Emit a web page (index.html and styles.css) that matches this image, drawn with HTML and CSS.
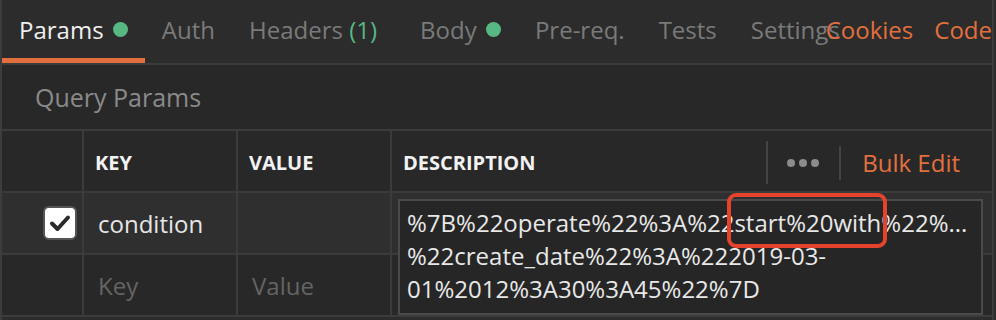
FILE: index.html
```html
<!DOCTYPE html>
<html lang="en">
<head>
  <meta charset="UTF-8" />
  <title>Params</title>
  <link rel="stylesheet" href="styles.css">
</head>
<body>

  <div class="panel">
    <div class="tabs">
      <div class="tab-list">
        <div class="tab active">Params <span class="dot"></span></div>
        <div class="tab">Auth</div>
        <div class="tab">Headers <span class="count">(1)</span></div>
        <div class="tab">Body <span class="dot"></span></div>
        <div class="tab">Pre-req.</div>
        <div class="tab">Tests</div>
        <div class="tab">Settings</div>
      </div>
      <div class="tab-actions">
        <span>Cookies</span>
        <span>Code</span>
      </div>
    </div>

    <div class="section-title">Query Params</div>

    <div class="params">
      <div class="cell head"></div>
      <div class="cell head">KEY</div>
      <div class="cell head">VALUE</div>
      <div class="cell head last">
        <span class="head-label">DESCRIPTION</span>
        <span class="sep tall"></span>
        <span class="more"><i></i><i></i><i></i></span>
        <span class="sep"></span>
        <span class="bulk">Bulk Edit</span>
      </div>

      <div class="cell row check-cell">
        <span class="checkbox">
          <svg width="22" height="18" viewBox="0 0 22 18"><path d="M3 9.5 L8.5 15 L19 3.5" fill="none" stroke="#2b2b2b" stroke-width="4" stroke-linecap="round" stroke-linejoin="round"/></svg>
        </span>
      </div>
      <div class="cell row">condition</div>
      <div class="cell row"></div>
      <div class="cell row last desc-cell">
        <div class="editor">
          <div class="editor-line">%7B%22operate%22%3A%22start%20with%22%...</div>
          <div class="editor-line">%22create_date%22%3A%222019-03-</div>
          <div class="editor-line">01%2012%3A30%3A45%22%7D</div>
        </div>
        <div class="mark"></div>
      </div>

      <div class="cell blank"></div>
      <div class="cell blank placeholder">Key</div>
      <div class="cell blank placeholder">Value</div>
      <div class="cell blank last"></div>
    </div>
  </div>

</body>
</html>
```

FILE: styles.css
```css
body {
  margin: 0;
  background: #2c2c2c;
  font-family: "Open Sans", "Liberation Sans", sans-serif;
  overflow: hidden;
}
.panel {
  width: 990px;
  height: 320px;
  border-left: 2px solid #3d3d3d;
  border-right: 2px solid #3d3d3d;
  overflow: hidden;
}
.tabs {
  display: flex;
  height: 63px;
  border-bottom: 2px solid #3b3b3b;
  background: #2c2c2c;
  font-size: 24px;
}
.tab-list {
  display: flex;
  flex: 1;
  min-width: 0;
}
.tab {
  display: flex;
  align-items: center;
  flex-shrink: 0;
  padding: 0 17px 4px;
  color: #7a7a7a;
  white-space: pre;
}
.tab.active {
  color: #f0f0f0;
  box-shadow: inset 0 -5px 0 #e2703f;
}
.dot {
  width: 15px;
  height: 15px;
  margin-left: 3px;
  border-radius: 50%;
  background: #57b884;
}
.count {
  color: #57b884;
  margin-right: 9px;
}
.tab-actions {
  display: flex;
  align-items: center;
  gap: 21px;
  flex-shrink: 0;
  padding-bottom: 4px;
  color: #e2703f;
}
.section-title {
  height: 64px;
  padding-left: 33px;
  display: flex;
  align-items: center;
  background: #282828;
  border-bottom: 2px solid #3b3b3b;
  color: #8a8a8a;
  font-size: 25px;
}
.params {
  display: grid;
  grid-template-columns: 82px 154px 154px 1fr;
  grid-auto-rows: 62px;
}
.cell {
  display: flex;
  align-items: center;
  box-sizing: border-box;
  border-right: 2px solid #3b3b3b;
  border-bottom: 2px solid #3b3b3b;
  font-size: 24px;
  color: #e6e6e6;
  padding-left: 14px;
}
.cell.last {
  border-right: none;
}
.head {
  background: #282828;
  padding-left: 11px;
  padding-top: 3px;
  font-size: 20px;
  font-weight: 700;
  color: #f2f2f2;
}
.head-label {
  flex: 1;
}
.sep {
  width: 2px;
  height: 34px;
  background: #444;
}
.sep.tall {
  height: 43px;
}
.more {
  display: flex;
  gap: 4px;
  padding: 0 20px 0 19px;
}
.more i {
  width: 8px;
  height: 8px;
  border-radius: 50%;
  background: #8c8c8c;
}
.bulk {
  padding: 0 32px 0 21px;
  font-weight: 400;
  font-size: 24px;
  color: #e2703f;
}
.row {
  background: #2f2f2f;
}
.check-cell {
  justify-content: flex-end;
  padding-right: 5px;
}
.checkbox {
  display: flex;
  align-items: center;
  justify-content: center;
  width: 30px;
  height: 30px;
  border: 2px solid #555;
  border-radius: 6px;
  background: #fff;
}
.blank {
  background: #282828;
}
.placeholder {
  color: #646464;
}
.desc-cell {
  position: relative;
  overflow: visible;
}
.editor {
  position: absolute;
  left: 6px;
  top: 6px;
  width: 585px;
  height: 116px;
  box-sizing: border-box;
  border: 2px solid #4a4a4a;
  background: #262626;
  padding: 5px 7px;
  font-size: 24px;
  line-height: 33px;
  color: #e8e8e8;
  white-space: nowrap;
  z-index: 1;
}
.mark {
  position: absolute;
  left: 335px;
  top: 0;
  width: 160px;
  height: 55px;
  box-sizing: border-box;
  border: 4px solid #e5432b;
  border-radius: 9px;
  z-index: 2;
}
```
